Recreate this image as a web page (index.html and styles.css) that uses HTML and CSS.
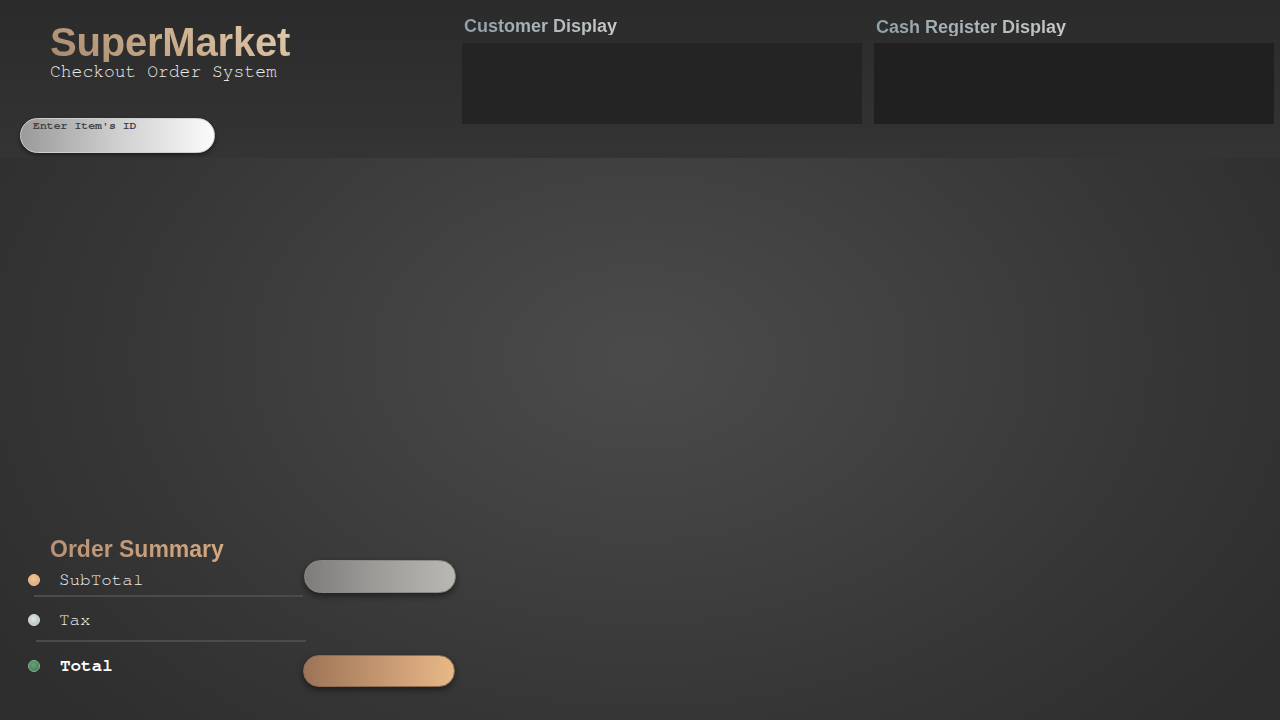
FILE: index.html
```html
<!DOCTYPE html>
<html lang="en">
<head>
<meta charset="utf-8">
<title>SuperMarket Checkout Order System</title>
<link rel="stylesheet" href="styles.css">
</head>
<body>
<header class="top">
  <div class="brand-col">
    <h1 class="brand">SuperMarket</h1>
    <p class="tagline">Checkout Order System</p>
    <textarea class="item-input" placeholder="Enter Item's ID"></textarea>
  </div>
  <section class="display">
    <h2 class="display-title">Customer Display</h2>
    <div class="screen screen-customer"></div>
  </section>
  <section class="display display-reg">
    <h2 class="display-title">Cash Register Display</h2>
    <div class="screen screen-register"></div>
  </section>
</header>
<main class="stage">
  <section class="summary">
    <h2 class="summary-title">Order Summary</h2>
    <div class="row row-sub">
      <div class="label"><span class="dot dot-sub"></span><span>SubTotal</span></div>
      <div class="pill pill-grey"></div>
    </div>
    <div class="rule"></div>
    <div class="row row-tax">
      <div class="label"><span class="dot dot-tax"></span><span>Tax</span></div>
    </div>
    <div class="rule rule-2"></div>
    <div class="row row-total">
      <div class="label label-total"><span class="dot dot-total"></span><span>Total</span></div>
      <div class="pill pill-copper"></div>
    </div>
  </section>
</main>
</body>
</html>
```

FILE: styles.css
```css
* { box-sizing: border-box; }
html, body { margin: 0; padding: 0; }
body {
  width: 1280px;
  height: 720px;
  overflow: hidden;
  background: #333;
  font-family: "Liberation Sans", Arial, sans-serif;
}

.top {
  height: 158px;
  display: flex;
  background: linear-gradient(180deg, #2b2b2b 0%, #303030 60%, #343434 100%);
}

.brand-col {
  flex: none;
  width: 462px;
  padding: 22px 0 0 20px;
  display: flex;
  flex-direction: column;
  align-items: flex-start;
}

.brand {
  margin: 0 0 1px 30px;
  font-size: 40px;
  line-height: 40px;
  font-weight: 700;
  letter-spacing: -0.2px;
  background: linear-gradient(30deg, #a4866c 0%, #c8aa8a 45%, #e2ccae 100%);
  -webkit-background-clip: text;
  background-clip: text;
  color: transparent;
}

.tagline {
  margin: 0 0 0 30px;
  font-family: "Nimbus Mono PS", "FreeMono", "Courier New", "Liberation Mono", monospace;
  font-size: 18px;
  line-height: 18px;
  color: #ececec;
}

.item-input {
  margin-top: 37px;
  width: 195px;
  height: 35px;
  border-radius: 18px;
  border: 1px solid #cfcfcf;
  padding: 0 12px;
  resize: none;
  background: linear-gradient(90deg, #9a9a9a 0%, #cfcfcf 50%, #fbfbfb 100%);
  box-shadow: 0 2px 4px rgba(0,0,0,0.45);
  font-family: "Nimbus Mono PS", "FreeMono", "Courier New", "Liberation Mono", monospace;
  font-weight: 700;
  font-size: 11.5px;
  line-height: 13px;
  color: #333;
  outline: none;
  overflow: hidden;
}
.item-input::placeholder { color: #444; opacity: 1; }

.display {
  flex: none;
  width: 400px;
  margin-right: 12px;
  padding-top: 17px;
}
.display-reg { padding-top: 18px; margin-right: 0; }

.display-title {
  margin: 0 0 8px 2px;
  font-size: 18px;
  line-height: 18px;
  font-weight: 700;
  background: linear-gradient(90deg, #8fa0a8 0%, #a9b4b8 45%, #c6c8c6 100%);
  -webkit-background-clip: text;
  background-clip: text;
  color: transparent;
  display: inline-block;
}

.screen {
  height: 81px;
  background: #242424;
}
.display-reg .display-title { margin-bottom: 7px; }
.screen-register { background: #202020; }

.stage {
  height: 562px;
  background: radial-gradient(ellipse 760px 520px at 640px 200px, #4b4b4b 0%, #414141 35%, #363636 70%, #2e2e2e 100%);
  display: flex;
  flex-direction: column;
  justify-content: flex-end;
  padding: 0 0 31px 28px;
}

.summary {
  width: 430px;
}

.summary-title {
  display: block;
  width: fit-content;
  margin: 0 0 -3px 22px;
  font-size: 23px;
  line-height: 26px;
  font-weight: 700;
  background: linear-gradient(90deg, #b89276 0%, #d2a880 100%);
  -webkit-background-clip: text;
  background-clip: text;
  color: transparent;
}

.row {
  display: flex;
  align-items: flex-start;
}

.label {
  width: 276px;
  display: flex;
  align-items: center;
  gap: 19px;
  font-family: "Nimbus Mono PS", "FreeMono", "Courier New", "Liberation Mono", monospace;
  font-size: 17.6px;
  line-height: 20px;
  color: #ededed;
}
.label-total { font-weight: 700; color: #ffffff; gap: 20px; }

.row-sub { height: 36px; }
.row-sub .label { margin-top: 11px; }
.row-tax { height: 43px; }
.row-tax .label { margin-top: 13px; }
.row-total { height: 47px; }
.row-total .label { margin-top: 14px; }

.dot {
  width: 12px;
  height: 12px;
  border-radius: 50%;
  flex: none;
}
.dot-sub { background: radial-gradient(circle at 45% 40%, #f2c898 0%, #e0aa78 80%); border: 1px solid #f0c89c; }
.dot-tax { background: radial-gradient(circle at 45% 40%, #e2e8e6 0%, #b4bebc 85%); border: 1px solid #dde4e2; }
.dot-total { background: radial-gradient(circle at 45% 40%, #6aa27a 0%, #3f7a50 85%); border: 1px solid #86b896; }

.rule {
  height: 2px;
  width: 269px;
  margin-left: 6px;
  background: #4b4b4b;
}
.rule-2 { width: 270px; margin-left: 8px; }

.pill {
  width: 152px;
  height: 33px;
  border-radius: 17px;
  box-shadow: 0 3px 6px rgba(0,0,0,0.45);
}
.pill-grey {
  margin-top: 1px;
  background: linear-gradient(90deg, #7e7c7a 0%, #9c9a97 45%, #bab8b2 100%);
  border: 1px solid #8a8886;
}
.pill-copper {
  margin-top: 13px;
  margin-left: -1px;
  height: 32px;
  background: linear-gradient(90deg, #9c7456 0%, #c49670 50%, #e8b886 100%);
  border: 1px solid #8e6c52;
}
```
